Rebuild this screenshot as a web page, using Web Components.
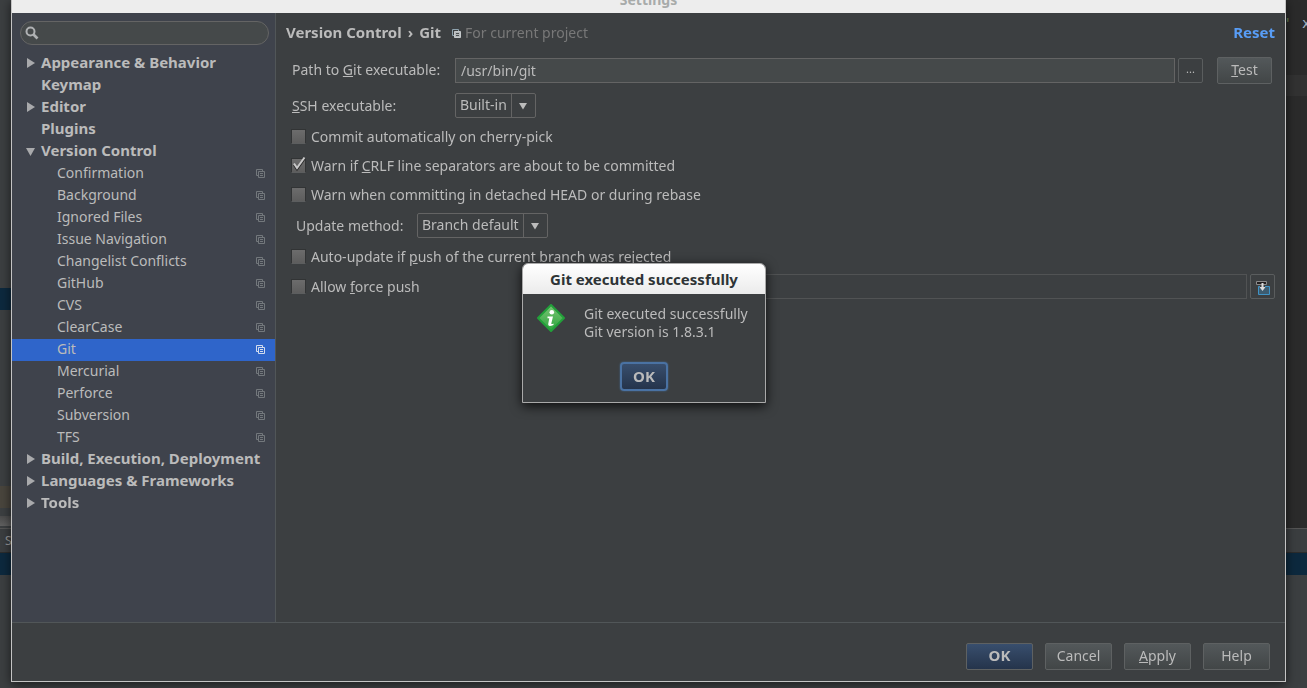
<!DOCTYPE html>
<html lang="en">
<head>
<meta charset="utf-8">
<title>Settings</title>
<style>
  html, body { height: 100%; }
  body {
    margin: 0;
    overflow: hidden;
    background: #3c3f41;
    color: #bbbbbb;
    font: 14px/20px "Noto Sans", "Open Sans", sans-serif;
    --bold-size: 15px;
    --line: #515658;
    --field: #45494a;
    --field-line: #646464;
  }
  settings-window { height: calc(100vh - 6px); margin: 0 21px 0 11px; }
  message-dialog { position: absolute; left: 522px; top: 263px; }
</style>
</head>
<body>
<ide-backdrop></ide-backdrop>

<settings-window heading="Settings">
  <settings-tree slot="sidebar">
    <tree-row state="closed">Appearance &amp; Behavior</tree-row>
    <tree-row>Keymap</tree-row>
    <tree-row state="closed">Editor</tree-row>
    <tree-row>Plugins</tree-row>
    <tree-row state="open">Version Control</tree-row>
    <tree-row child>Confirmation</tree-row>
    <tree-row child>Background</tree-row>
    <tree-row child>Ignored Files</tree-row>
    <tree-row child>Issue Navigation</tree-row>
    <tree-row child>Changelist Conflicts</tree-row>
    <tree-row child>GitHub</tree-row>
    <tree-row child>CVS</tree-row>
    <tree-row child>ClearCase</tree-row>
    <tree-row child selected>Git</tree-row>
    <tree-row child>Mercurial</tree-row>
    <tree-row child>Perforce</tree-row>
    <tree-row child>Subversion</tree-row>
    <tree-row child>TFS</tree-row>
    <tree-row state="closed">Build, Execution, Deployment</tree-row>
    <tree-row state="closed">Languages &amp; Frameworks</tree-row>
    <tree-row state="closed">Tools</tree-row>
  </settings-tree>

  <git-panel></git-panel>

  <push-button slot="footer" primary>OK</push-button>
  <push-button slot="footer">Cancel</push-button>
  <push-button slot="footer"><u>A</u>pply</push-button>
  <push-button slot="footer">Help</push-button>
</settings-window>

<message-dialog heading="Git executed successfully">
  Git executed successfully<br>Git version is 1.8.3.1
</message-dialog>

<script>
function define(name, html, setup) {
  customElements.define(name, class extends HTMLElement {
    constructor() {
      super();
      this.attachShadow({ mode: 'open' }).innerHTML = html;
    }
    connectedCallback() {
      if (setup) setup(this, this.shadowRoot);
    }
  });
}

// the IDE frame that shows around the settings window
define('ide-backdrop', `
  <style>
    :host { position: fixed; inset: 0; z-index: -1; display: flex; flex-direction: column; }
    .top { flex: 1; display: flex; justify-content: space-between; }
    .project { width: 50%; display: flex; flex-direction: column; background: #3c3f41; }
    .editor { width: 50%; background: #2b2b2b; }
    .code { display: flex; justify-content: flex-end; gap: 10px; height: 75px; box-sizing: border-box;
            padding-top: 14px; font: 14px/18px "DejaVu Sans Mono", monospace; color: #a9b7c6; white-space: pre; }
    .code i { font-style: normal; color: #6a8759; }
    .code b { font-weight: normal; width: 5px; overflow: hidden; }
    .caret { height: 21px; background: #323232; }
    .sel { height: 22px; background: #0d293e; }
    .lib { height: 22px; background: #49453d; }
    .split { height: 10px; margin: 8px 0 2px; background: linear-gradient(#4b4b4b, #606060); }
    .gap { height: 288px; }
    .fill { flex: 1; }
    .tool { height: 160px; box-sizing: border-box; border-top: 1px solid #555; }
    .tabs { height: 23px; padding-left: 5px; font-size: 12px; line-height: 24px; color: #999;
            border-bottom: 1px solid #2c2c2c; background: #3b3e40; }
  </style>
  <div class="top">
    <div class="project">
      <div class="gap"></div><div class="sel"></div><div class="fill"></div>
      <div class="lib"></div><div class="split"></div>
    </div>
    <div class="editor"><div class="code"><i>'</i><b>x</b></div><div class="caret"></div></div>
  </div>
  <div class="tool"><div class="tabs">S</div><div class="sel"></div></div>
`);

define('settings-window', `
  <style>
    :host { display: flex; flex-direction: column; box-sizing: border-box; position: relative;
            border: 1px solid #c4c4c4; border-top: 0; background: #3c3f41;
            box-shadow: 0 2px 10px rgba(0, 0, 0, .6); }
    header { height: 13px; display: flex; align-items: flex-end; justify-content: center;
             overflow: hidden; background: #ededed; color: #a8abaa; font-weight: bold; }
    header span { padding-bottom: 3px; }
    .body { flex: 1; display: flex; min-height: 0; }
    aside { width: 263px; background: #3f434c; border-right: 1px solid var(--line); }
    main { flex: 1; min-width: 0; }
    footer { display: flex; justify-content: flex-end; align-items: center; gap: 12px;
             height: 50px; padding: 8px 15px 0; border-top: 1px solid var(--line);
             --button-width: 67px; }
  </style>
  <header><span></span></header>
  <div class="body">
    <aside><slot name="sidebar"></slot></aside>
    <main><slot></slot></main>
  </div>
  <footer><slot name="footer"></slot></footer>
`, (el, root) => {
  root.querySelector('header span').textContent = el.getAttribute('heading');
});

define('settings-tree', `
  <style>
    :host { display: block; }
    .search { display: flex; align-items: center; height: 22px; margin: 8px 6px 8px 8px; padding-left: 4px;
              border: 1px solid #646464; border-radius: 12px; background: var(--field); }
    input { flex: 1; min-width: 0; border: 0; outline: 0; background: none; color: inherit; font: inherit; }
  </style>
  <div class="search">
    <svg width="14" height="14" viewBox="0 0 14 14" fill="none" stroke="#afb1b3">
      <circle cx="5.5" cy="5.5" r="4" stroke-width="2"/>
      <path d="M8.5 8.5L12.5 12.5" stroke-width="2.6"/>
    </svg>
    <input type="text" aria-label="Search settings">
  </div>
  <div role="tree"><slot></slot></div>
`);

define('scope-icon', `
  <style>
    :host { display: block; width: 9px; height: 9px; }
    svg { display: block; }
    .front { fill: var(--icon-fill, none); }
    .back { stroke: var(--icon-back, currentColor); }
    .lines { stroke: var(--icon-lines, currentColor); }
  </style>
  <svg width="9" height="9" viewBox="0 0 9 9" fill="none" stroke="currentColor">
    <path class="back" d="M2 6.5H.5V.5H6.5V2"/>
    <path class="front" d="M2.5 2.5H8.5V8.5H2.5Z"/>
    <path class="lines" d="M4 4.5H7M4 6.5H7"/>
  </svg>
`);

define('tree-row', `
  <style>
    :host { display: flex; align-items: center; box-sizing: border-box; height: 22px; padding: 0 10px 2px 13px;
            font-size: var(--bold-size); font-weight: bold; white-space: nowrap; }
    :host([child]) { padding-left: 29px; font-size: 14px; font-weight: normal; }
    :host([selected]) { background: #2f65ca; }
    .arrow { width: 16px; flex: none; }
    .arrow svg { display: none; margin-left: 1px; fill: #a9aaac; }
    :host([state=closed]) .closed, :host([state=open]) .open { display: block; }
    .text { flex: 1; line-height: 20px; padding-bottom: 2px; }
    :host([child]) .text { padding-bottom: 0; }
    scope-icon { display: none; color: #73787c; }
    :host([child]) scope-icon { display: block; }
    :host([selected]) scope-icon { color: #d3dcee; }
  </style>
  <span class="arrow">
    <svg class="closed" width="9" height="10" viewBox="0 0 9 10"><path d="M1 0L9 5L1 10Z"/></svg>
    <svg class="open" width="9" height="9" viewBox="0 0 9 9"><path d="M0 1H9L4.5 9Z"/></svg>
  </span>
  <span class="text"><slot></slot></span>
  <scope-icon></scope-icon>
`, el => {
  el.setAttribute('role', 'treeitem');
});

define('push-button', `
  <style>
    :host { display: block; flex: none; }
    button { display: block; width: var(--button-width, auto); height: 27px; padding: 0 0 1px; border: 1px solid #5e6162; border-radius: 2px;
             background: linear-gradient(#53585a, #424647); color: inherit; font: inherit; line-height: 20px; }
    :host([primary]) button { padding-bottom: 2px; font-size: var(--bold-size); font-weight: bold; background: linear-gradient(#384e6d, #25344b); }
    :host([flat]) button { width: 25px; height: 25px; padding: 0 0 4px; border-color: #5a5d5e; background: none; font-size: 11px; }
    :host([icon]) button { padding: 1px 0 0; }
    :host([focused]) button { height: 29px; border: 2px solid #4a72a3; border-radius: 4px; box-shadow: 0 0 2px #466d94; }
    ::slotted(svg) { display: block; margin: auto; }
  </style>
  <button type="button"><slot></slot></button>
`);

define('check-option', `
  <style>
    :host { display: flex; }
    label { display: flex; align-items: center; gap: 5px; white-space: nowrap; }
    .box { display: grid; width: 15px; height: 15px; }
    .box > * { grid-area: 1 / 1; }
    input { appearance: none; margin: 0; width: 15px; height: 15px; border: 1px solid #323435; border-bottom-color: #5c5e5f;
            border-radius: 1px; background: linear-gradient(#6c6c6c, #5d5d5d); }
    svg { display: none; overflow: visible; pointer-events: none; }
    input:checked + svg { display: block; }
    .text { padding-top: 1px; }
  </style>
  <label>
    <span class="box">
      <input type="checkbox">
      <svg width="14" height="14" viewBox="0 0 14 14" fill="none">
        <path d="M3 7L6 11.5L13.5 1" stroke="#282828" stroke-width="2"/>
        <path d="M3 5.5L6 10L13.5 -.5" stroke="#c8c8c8" stroke-width="2"/>
      </svg>
    </span>
    <span class="text"><slot></slot></span>
  </label>
`, (el, root) => {
  root.querySelector('input').checked = el.hasAttribute('checked');
});

define('combo-field', `
  <style>
    :host { display: flex; align-items: center; }
    label { width: var(--label-width, auto); padding-top: 1px; white-space: nowrap; }
    .combo { display: flex; height: 23px; border: 1px solid #646464; border-radius: 2px; }
    select { appearance: none; margin: 0; padding: 0 4px 2px 4px; border: 0; border-right: 1px solid #646464; outline: 0;
             background: none; color: inherit; font: inherit; line-height: 20px; }
    svg { width: 23px; height: 23px; }
  </style>
  <label for="value"><slot></slot></label>
  <span class="combo">
    <select id="value"><option></option></select>
    <svg viewBox="0 0 23 23"><path d="M7 9H15L11 15.5Z" fill="#bbbbbb"/></svg>
  </span>
`, (el, root) => {
  root.querySelector('option').textContent = el.getAttribute('value');
});

define('path-field', `
  <style>
    :host { display: flex; align-items: center; }
    label { flex: none; width: var(--label-width, auto); padding-bottom: 1px; white-space: nowrap; }
    input { flex: 1; min-width: 0; height: 25px; box-sizing: border-box; padding: 0 5px 1px; border: 1px solid var(--field-line);
            outline: 0; background: var(--field); color: inherit; font: inherit; }
    :host([disabled]) input { border-color: #515354; background: none; }
  </style>
  <label for="value"><slot></slot></label>
  <input id="value" type="text">
`, (el, root) => {
  const input = root.querySelector('input');
  input.value = el.getAttribute('value') || '';
  input.disabled = el.hasAttribute('disabled');
});

define('git-panel', `
  <style>
    :host { display: block; padding: 9px 10px; }
    .title { display: flex; align-items: center; height: 20px; font-size: var(--bold-size); font-weight: bold; }
    .crumbs { display: flex; gap: 6px; }
    .title scope-icon { margin: 2px 4px 0 11px; color: #c4c8ca; --icon-back: #8fa3ae; --icon-fill: #b4b8ba; --icon-lines: #4c5052; }
    .title small { flex: 1; padding-top: 1px; font-size: 14px; font-weight: normal; color: #787878; }
    a { color: #589df6; text-decoration: none; }
    .rows { display: flex; flex-direction: column; padding-left: 6px; }
    .path { display: flex; align-items: center; gap: 3px; height: 27px; margin-top: 15px; padding-right: 3px;
            --label-width: 163px; --button-width: 55px; }
    .path path-field { flex: 1; }
    .path push-button:last-child { margin-left: 11px; }
    .ssh { height: 25px; margin-top: 9px; --label-width: 163px; }
    check-option { height: 29px; margin-left: -1px; }
    .checks { margin-top: 4px; }
    .method { height: 25px; margin: 4px 0 4px 4px; --label-width: 121px; }
    .force { display: flex; align-items: center; gap: 3px; margin-top: 1px; }
    .force path-field { flex: 1; margin-left: 140px; }
  </style>
  <div class="title">
    <div class="crumbs"><span>Version Control</span><span>›</span><span>Git</span></div>
    <scope-icon></scope-icon>
    <small>For current project</small>
    <a href="#">Reset</a>
  </div>
  <div class="rows">
    <div class="path">
      <path-field value="/usr/bin/git">Path to <u>G</u>it executable:</path-field>
      <push-button flat>...</push-button>
      <push-button><u>T</u>est</push-button>
    </div>
    <combo-field class="ssh" value="Built-in"><u>S</u>SH executable:</combo-field>
    <div class="checks">
      <check-option>Commit automatically on cherry-pick</check-option>
      <check-option checked>Warn if <u>C</u>RLF line separators are about to be committed</check-option>
      <check-option>Warn when committing in detached HEAD or during rebase</check-option>
    </div>
    <combo-field class="method" value="Branch default">Update method:</combo-field>
    <check-option>Auto-update if <u>p</u>ush of the current branch was rejected</check-option>
    <div class="force">
      <check-option>Allow <u>f</u>orce push</check-option>
      <path-field disabled></path-field>
      <push-button flat icon>
        <svg width="15" height="15" viewBox="0 0 15 15" fill="none">
          <path d="M1.5 1.5H11.5V4.5H1.5Z" fill="#231f20" stroke="#8b8b8b"/>
          <path d="M3.5 6.5H14.5V14.5H3.5Z" fill="#3d5c70" stroke="#3f93c6"/>
          <path d="M5 6H10V7H5Z" fill="#3c3f41"/>
          <path d="M6.500 3H8.500V7H10.500L7.500 11L4.500 7H6.500Z" fill="#dcdcdc"/>
        </svg>
      </push-button>
    </div>
  </div>
`);

define('message-dialog', `
  <style>
    :host { display: block; box-sizing: border-box; width: 244px; border: 1px solid #a9a9a9; border-radius: 6px 6px 0 0;
            background: #3c3f41; box-shadow: 0 3px 12px rgba(0, 0, 0, .8); }
    header { height: 30px; border-radius: 5px 5px 0 0; background: linear-gradient(#ffffff, #ebebeb); color: #2e3436;
             font-size: var(--bold-size); font-weight: bold; line-height: 30px; text-align: center; white-space: nowrap; }
    .message { display: flex; gap: 19px; padding: 11px 0 0 14px; line-height: 18px; white-space: nowrap; }
    svg { flex: none; margin-top: -1px; }
    footer { display: flex; justify-content: center; padding: 21px 0 11px; --button-width: 48px; }
  </style>
  <header></header>
  <div class="message">
    <svg width="28" height="28" viewBox="0 0 28 28">
      <defs>
        <linearGradient id="green" x1="0" y1="0" x2="0" y2="1">
          <stop offset="0" stop-color="#7cc576"/><stop offset="1" stop-color="#2ba33c"/>
        </linearGradient>
      </defs>
      <path d="M14 1L27 14L14 27L1 14Z" fill="url(#green)" stroke="#22a03a" stroke-width="2" stroke-linejoin="round"/>
      <circle cx="14.800" cy="8.300" r="2.300" fill="#fff"/>
      <path d="M10.500 12.500H16L14.300 19.500Q14.300 20.500 16.500 19.500V21Q10.500 23.500 11.300 19.500L12.300 14.200H10.500Z" fill="#fff"/>
    </svg>
    <div><slot></slot></div>
  </div>
  <footer><push-button primary focused>OK</push-button></footer>
`, (el, root) => {
  root.querySelector('header').textContent = el.getAttribute('heading');
});
</script>
</body>
</html>
